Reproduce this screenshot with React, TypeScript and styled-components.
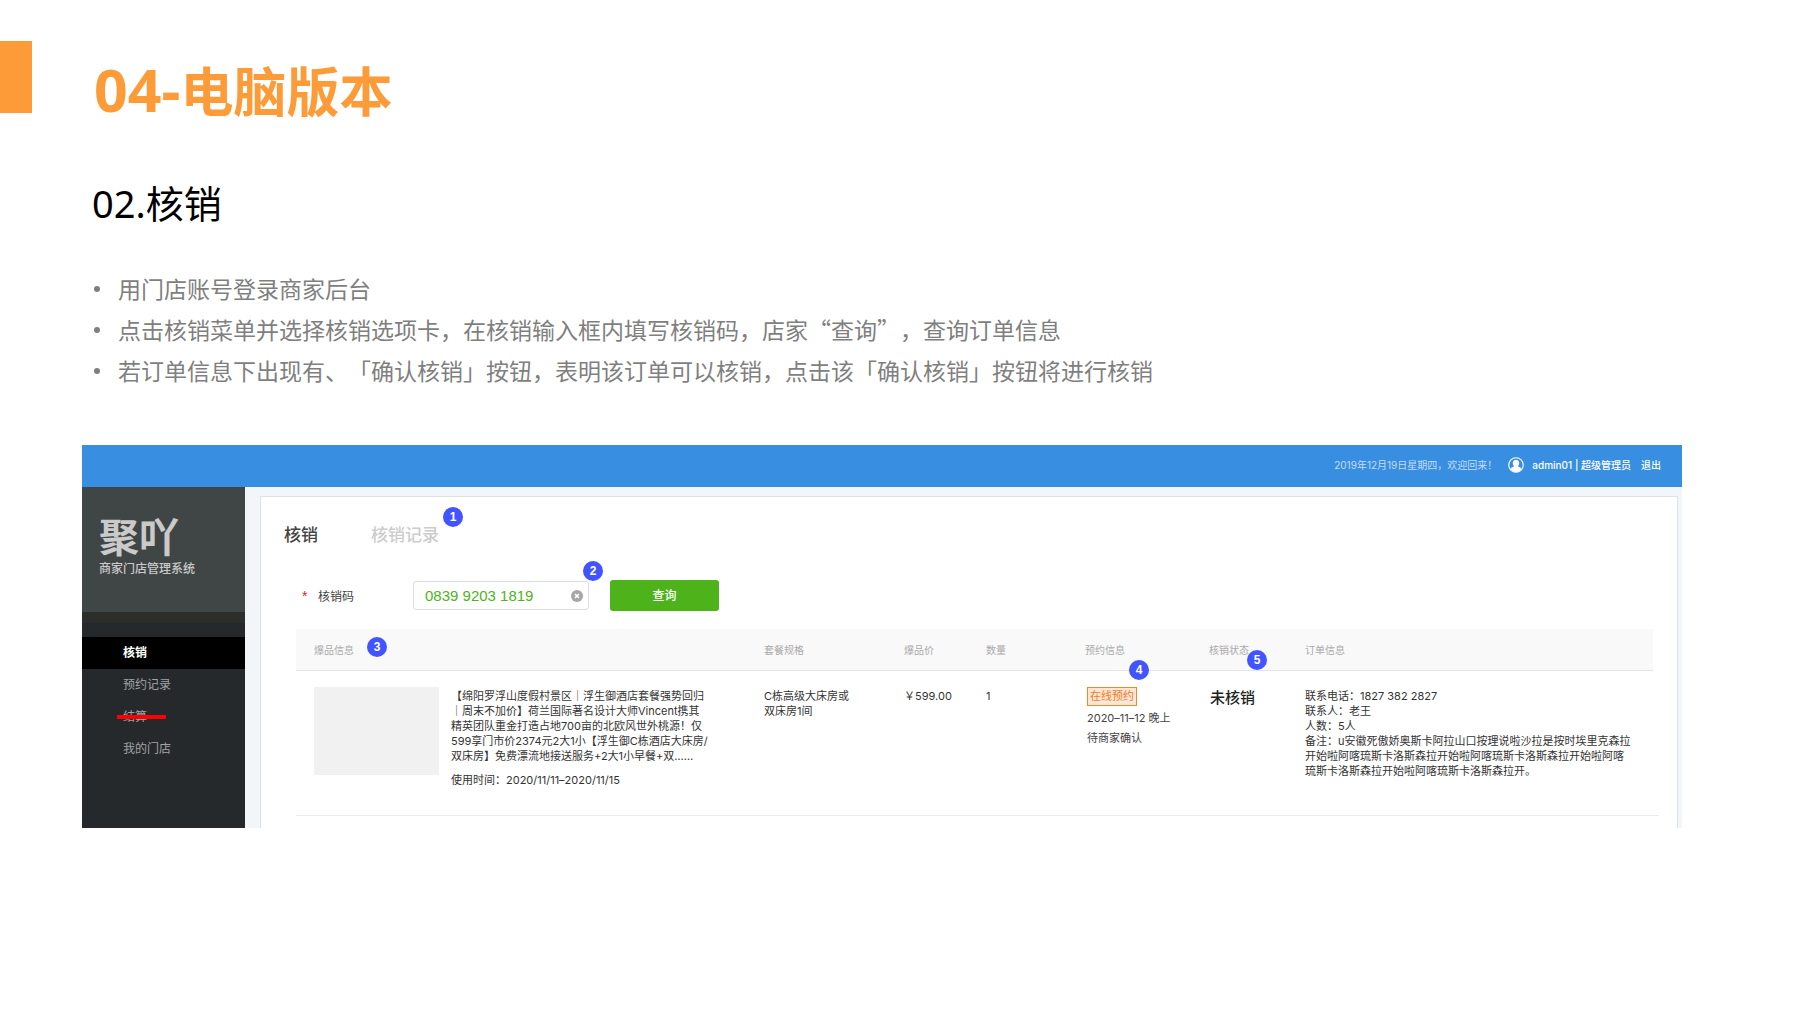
import React from "react";
import styled, { createGlobalStyle } from "styled-components";

const cjk = `"Noto Sans CJK SC", sans-serif`;
const latinFirst = `"Noto Sans", "Noto Sans CJK SC", sans-serif`;
const uiFont = `Inter, "Noto Sans CJK SC", sans-serif`;

const GlobalStyle = createGlobalStyle`
  *, *::before, *::after { box-sizing: border-box; }
  body {
    margin: 0;
    background: #fff;
    font-family: ${cjk};
    text-spacing-trim: space-all;
  }
`;

const Slide = styled.main`
  padding-top: 41px;
`;

const SlideHeader = styled.header`
  display: flex;
  align-items: flex-start;
`;

const Accent = styled.div`
  width: 32px;
  height: 72px;
  background: #fd9b38;
`;

const Title = styled.h1`
  margin: 8px 0 0 62px;
  font-family: ${latinFirst};
  font-size: 53px;
  line-height: 80px;
  font-weight: 700;
  color: #fd9b38;
`;

const TitleNumber = styled.span`
  font-size: 59px;
`;

const Subtitle = styled.h2`
  margin: 43px 0 0 92px;
  font-family: ${latinFirst};
  font-size: 38px;
  line-height: 56px;
  font-weight: 400;
  color: #000;
`;

const Notes = styled.ul`
  margin: 37px 0 0 94px;
  padding: 0;
  list-style: none;
`;

const Note = styled.li`
  display: flex;
  align-items: center;
  gap: 18px;
  font-size: 23px;
  line-height: 41px;
  color: #7f7f7f;

  &::before {
    content: "";
    width: 6px;
    height: 6px;
    border-radius: 50%;
    background: #7f7f7f;
  }
`;

const Screen = styled.section`
  margin: 54px 118px 0 82px;
  font-family: ${uiFont};
`;

const TopBar = styled.div`
  display: flex;
  align-items: center;
  justify-content: flex-end;
  height: 42px;
  padding: 0 21px 3px 0;
  background: #388ee0;
  font-size: 10px;
  color: #fff;
`;

const Greeting = styled.span`
  color: #c3ddf6;
`;

const Avatar = styled.svg`
  width: 16px;
  height: 16px;
  margin: 0 8px 0 11px;
`;

const UserName = styled.span`
  font-weight: 500;
`;

const Logout = styled.a`
  margin-left: 10px;
  font-weight: 500;
  color: #fff;
  text-decoration: none;
`;

const Body = styled.div`
  display: flex;
  height: 341px;
  overflow: hidden;
`;

const Sidebar = styled.aside`
  flex: none;
  width: 163px;
  background: #25292c;
`;

const Brand = styled.div`
  height: 136px;
  padding: 27px 17px 0;
  background: #404645;
  border-bottom: 11px solid #2c2e2c;
  color: #cacaca;
`;

const BrandName = styled.div`
  font-size: 40px;
  line-height: 48px;
  font-weight: 700;
`;

const BrandSub = styled.div`
  font-size: 12px;
  line-height: 14px;
  font-weight: 500;
`;

const Menu = styled.nav`
  display: flex;
  flex-direction: column;
  padding-top: 14px;
`;

const MenuItem = styled.a<{ $active?: boolean; $struck?: boolean }>`
  position: relative;
  padding-left: 41px;
  font-size: 12px;
  line-height: 32px;
  text-decoration: none;
  font-weight: ${(p) => (p.$active ? 700 : 400)};
  color: ${(p) => (p.$active ? "#fff" : "#a2a3a4")};
  background: ${(p) => (p.$active ? "#000" : "transparent")};

  &::after {
    content: "";
    display: ${(p) => (p.$struck ? "block" : "none")};
    position: absolute;
    left: 35px;
    top: 14px;
    width: 49px;
    height: 4px;
    background: #f00;
  }
`;

const Content = styled.div`
  flex: 1;
  min-width: 0;
  display: flex;
  padding: 9px 4px 0 15px;
  background: #f2f6f9;
`;

const Panel = styled.div`
  flex: 1;
  min-width: 0;
  padding: 26px 18px 0 23px;
  background: #fff;
  border: 1px solid #dde2e5;
  border-bottom: 0;
`;

const Tabs = styled.div`
  display: flex;
  gap: 53px;
`;

const Tab = styled.button<{ $active?: boolean }>`
  position: relative;
  padding: 0;
  border: 0;
  background: none;
  font: 500 17px / 24px ${uiFont};
  color: ${(p) => (p.$active ? "#444" : "#ccc")};
`;

const Badge = styled.span<{ $left: number; $top: number }>`
  position: absolute;
  left: ${(p) => p.$left}px;
  top: ${(p) => p.$top}px;
  width: 20px;
  height: 20px;
  border-radius: 50%;
  background: #4254ff;
  color: #fff;
  font: 700 12px / 20px "Liberation Sans", sans-serif;
  text-align: center;
`;

const SearchForm = styled.form`
  display: flex;
  align-items: center;
  margin-top: 33px;
  padding-left: 18px;
`;

const FieldLabel = styled.label`
  width: 111px;
  font-size: 12px;
  color: #444;
`;

const Required = styled.span`
  display: inline-block;
  width: 16px;
  font-family: "Liberation Sans", sans-serif;
  font-size: 14px;
  color: #e02020;
`;

const Field = styled.div`
  position: relative;
  display: flex;
  align-items: center;
  width: 176px;
  height: 29px;
  padding: 0 5px 0 11px;
  border: 1px solid #ddd;
  border-radius: 3px;
`;

const CodeInput = styled.input`
  flex: 1;
  min-width: 0;
  padding: 0;
  border: 0;
  outline: 0;
  background: none;
  font: 15px / 20px "Liberation Sans", sans-serif;
  color: #4eb31a;
`;

const ClearButton = styled.button`
  display: flex;
  padding: 0;
  border: 0;
  background: none;
`;

const QueryButton = styled.button`
  width: 109px;
  height: 31px;
  margin-left: 21px;
  padding: 0;
  border: 0;
  border-radius: 3px;
  background: #4eb31a;
  color: #fff;
  font: 500 12px / 31px ${uiFont};
`;

const TableWrap = styled.div`
  margin: 18px 0 0 12px;
  padding-right: 6px;
  border-bottom: 1px solid #ebebeb;
`;

const Table = styled.table`
  width: 100%;
  table-layout: fixed;
  border-collapse: collapse;
`;

const Col = styled.col<{ $width?: number }>`
  width: ${(p) => (p.$width ? `${p.$width}px` : "auto")};
`;

const Th = styled.th`
  position: relative;
  height: 41px;
  padding: 0 0 0 18px;
  background: #f9f9f9;
  border-bottom: 1px solid #e5e5e5;
  font-size: 10px;
  font-weight: 400;
  text-align: left;
  color: #aaa;
`;

const Td = styled.td`
  height: 145px;
  padding: 18px 0 0 18px;
  vertical-align: top;
  font-size: 11px;
  line-height: 15px;
  white-space: nowrap;
  color: #333;
`;

const Product = styled.div`
  display: flex;
  gap: 12px;
`;

const Thumb = styled.div`
  width: 125px;
  height: 88px;
  margin-top: -2px;
  background: #f1f1f1;
`;

const UseTime = styled.div`
  margin-top: 9px;
`;

const Booking = styled.div`
  display: flex;
  flex-direction: column;
  align-items: flex-start;
  gap: 5px;
  margin: -2px 0 0 2px;
  color: #444;
`;

const Tag = styled.span`
  padding: 0 2px;
  border: 1px solid #ee8833;
  background: #fce6d6;
  line-height: 17px;
  color: #ee7d22;
`;

const Status = styled.div`
  padding-left: 1px;
  font-size: 15px;
  line-height: 18px;
  font-weight: 500;
  color: #222;
`;

const Lines = ({ items }: { items: string[] }) => (
  <>
    {items.map((line, i) => (
      <div key={i}>{line}</div>
    ))}
  </>
);

const notes = [
  "用门店账号登录商家后台",
  "点击核销菜单并选择核销选项卡，在核销输入框内填写核销码，店家“查询”，查询订单信息",
  "若订单信息下出现有、「确认核销」按钮，表明该订单可以核销，点击该「确认核销」按钮将进行核销",
];

const productLines = [
  "【绵阳罗浮山度假村景区｜浮生御酒店套餐强势回归",
  "｜周末不加价】荷兰国际著名设计大师Vincent携其",
  "精英团队重金打造占地700亩的北欧风世外桃源！仅",
  "599享门市价2374元2大1小【浮生御C栋酒店大床房/",
  "双床房】免费漂流地接送服务+2大1小早餐+双……",
];

const orderLines = [
  "联系电话：1827 382 2827",
  "联系人：老王",
  "人数：5人",
  "备注：u安徽死傲娇奥斯卡阿拉山口按理说啦沙拉是按时埃里克森拉",
  "开始啦阿喀琉斯卡洛斯森拉开始啦阿喀琉斯卡洛斯森拉开始啦阿喀",
  "琉斯卡洛斯森拉开始啦阿喀琉斯卡洛斯森拉开。",
];

export default function App() {
  return (
    <Slide lang="zh-CN">
      <GlobalStyle />
      <SlideHeader>
        <Accent />
        <Title>
          <TitleNumber>04-</TitleNumber>电脑版本
        </Title>
      </SlideHeader>
      <Subtitle>02.核销</Subtitle>
      <Notes>
        {notes.map((note) => (
          <Note key={note}>{note}</Note>
        ))}
      </Notes>

      <Screen>
        <TopBar>
          <Greeting>2019年12月19日星期四，欢迎回来！</Greeting>
          <Avatar viewBox="0 0 16 16" aria-hidden="true">
            <circle cx="8" cy="8" r="7.3" fill="none" stroke="#fff" strokeWidth="1.1" />
            <path
              d="M8 2.8c2 0 3.2 1.4 3.2 3.3 0 1.3-.5 2.4-1.3 3 .2.9 3 1.2 3.8 2.9C12.5 13.9 10.5 15 8 15s-4.5-1.1-5.7-3C3.1 10.3 5.9 10 6.1 9.1c-.8-.6-1.3-1.7-1.3-3 0-1.9 1.2-3.3 3.2-3.3z"
              fill="#fff"
            />
          </Avatar>
          <UserName>admin01 | 超级管理员</UserName>
          <Logout href="#logout">退出</Logout>
        </TopBar>
        <Body>
          <Sidebar>
            <Brand>
              <BrandName>聚吖</BrandName>
              <BrandSub>商家门店管理系统</BrandSub>
            </Brand>
            <Menu>
              <MenuItem href="#verify" $active>核销</MenuItem>
              <MenuItem href="#bookings">预约记录</MenuItem>
              <MenuItem href="#settle" $struck>结算</MenuItem>
              <MenuItem href="#store">我的门店</MenuItem>
            </Menu>
          </Sidebar>
          <Content>
            <Panel>
              <Tabs>
                <Tab type="button" $active>核销</Tab>
                <Tab type="button">
                  核销记录
                  <Badge $left={72} $top={-16}>1</Badge>
                </Tab>
              </Tabs>
              <SearchForm onSubmit={(e) => e.preventDefault()}>
                <FieldLabel htmlFor="code">
                  <Required>*</Required>核销码
                </FieldLabel>
                <Field>
                  <CodeInput id="code" type="text" defaultValue="0839 9203 1819" />
                  <ClearButton type="button" aria-label="清除">
                    <svg width="12" height="12" viewBox="0 0 12 12" aria-hidden="true">
                      <circle cx="6" cy="6" r="6" fill="#a6a6a6" />
                      <path d="M4 4l4 4M8 4l-4 4" stroke="#fff" strokeWidth="1.6" />
                    </svg>
                  </ClearButton>
                  <Badge $left={169} $top={-21}>2</Badge>
                </Field>
                <QueryButton type="submit">查询</QueryButton>
              </SearchForm>
              <TableWrap>
                <Table>
                  <colgroup>
                    <Col $width={450} />
                    <Col $width={140} />
                    <Col $width={82} />
                    <Col $width={99} />
                    <Col $width={124} />
                    <Col $width={96} />
                    <Col />
                  </colgroup>
                  <thead>
                    <tr>
                      <Th>
                        爆品信息
                        <Badge $left={71} $top={8}>3</Badge>
                      </Th>
                      <Th>套餐规格</Th>
                      <Th>爆品价</Th>
                      <Th>数量</Th>
                      <Th>
                        预约信息
                        <Badge $left={62} $top={31}>4</Badge>
                      </Th>
                      <Th>
                        核销状态
                        <Badge $left={56} $top={21}>5</Badge>
                      </Th>
                      <Th>订单信息</Th>
                    </tr>
                  </thead>
                  <tbody>
                    <tr>
                      <Td>
                        <Product>
                          <Thumb />
                          <div>
                            <Lines items={productLines} />
                            <UseTime>使用时间：2020/11/11–2020/11/15</UseTime>
                          </div>
                        </Product>
                      </Td>
                      <Td>
                        <Lines items={["C栋高级大床房或", "双床房1间"]} />
                      </Td>
                      <Td>￥599.00</Td>
                      <Td>1</Td>
                      <Td>
                        <Booking>
                          <Tag>在线预约</Tag>
                          <span>2020–11–12 晚上</span>
                          <span>待商家确认</span>
                        </Booking>
                      </Td>
                      <Td>
                        <Status>未核销</Status>
                      </Td>
                      <Td>
                        <Lines items={orderLines} />
                      </Td>
                    </tr>
                  </tbody>
                </Table>
              </TableWrap>
            </Panel>
          </Content>
        </Body>
      </Screen>
    </Slide>
  );
}
